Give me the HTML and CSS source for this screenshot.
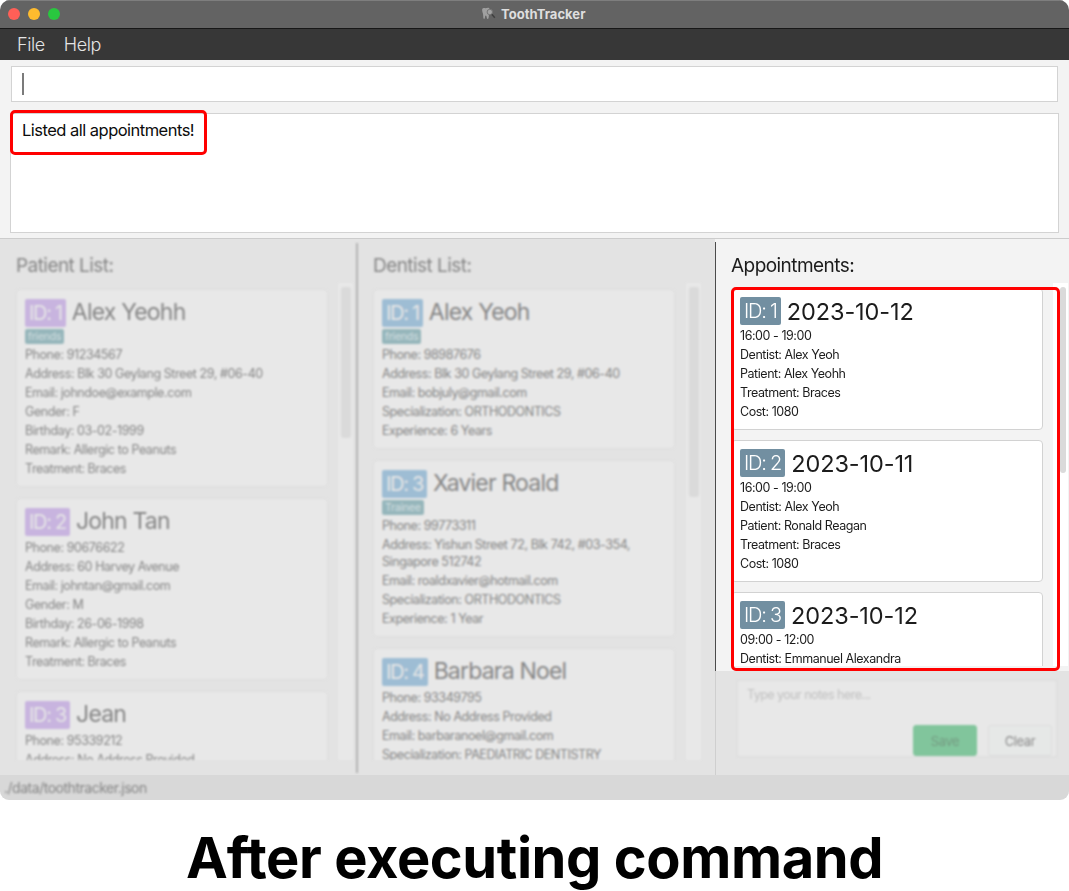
FILE: index.html
```
<!DOCTYPE html>
<html lang="en">
<head>
<meta charset="utf-8">
<title>ToothTracker</title>
<link rel="stylesheet" href="styles.css">
</head>
<body>
<div class="window">
  <header class="titlebar">
    <div class="lights"><i class="red"></i><i class="yellow"></i><i class="green"></i></div>
    <div class="title">
      <svg width="15" height="14" viewBox="0 0 15 14"><path d="M1.500 1.600C2.300.5 3.500 1.200 4.600 1.200S7 .3 8.200 1.200c1.200 1.300.4 3.500-.1 5.300-.4 1.700-.1 5.500-1.300 5.500S5.800 8.500 4.800 8.500 4.200 12 3.100 12 2.500 8 1.900 6.500C1.400 5 .7 2.800 1.500 1.600z" fill="#a0a0a0"/><circle cx="8.800" cy="5" r="2.700" fill="#a3a3a3" stroke="#757575" stroke-width="1"/><path d="M10.800 7.300l3 3.500" stroke="#3f3f3f" stroke-width="1.500"/></svg>
      <span>ToothTracker</span>
    </div>
  </header>
  <nav class="menubar"><span>File</span><span>Help</span></nav>
  <section class="command"><div class="input"><i class="caret"></i></div></section>
  <section class="result"><div class="output"><span>Listed all appointments!</span><i class="mark mark-result"></i></div></section>
  <main class="panels">
    <section class="panel patients dim">
      <div class="soft">
      <h2>Patient List:</h2>
      <div class="scroller">
        <div class="cards">
          <article class="card tagged"><h3><b>ID: 1</b><span>Alex Yeohh</span></h3><em>friends</em>
            <p>Phone: 91234567</p><p>Address: Blk 30 Geylang Street 29, #06-40</p><p>Email: johndoe@example.com</p><p>Gender: F</p><p>Birthday: 03-02-1999</p><p>Remark: Allergic to Peanuts</p><p>Treatment: Braces</p></article>
          <article class="card"><h3><b>ID: 2</b><span>John Tan</span></h3>
            <p>Phone: 90676622</p><p>Address: 60 Harvey Avenue</p><p>Email: johntan@gmail.com</p><p>Gender: M</p><p>Birthday: 26-06-1998</p><p>Remark: Allergic to Peanuts</p><p>Treatment: Braces</p></article>
          <article class="card"><h3><b>ID: 3</b><span>Jean</span></h3>
            <p>Phone: 95339212</p><p>Address: No Address Provided</p></article>
        </div>
        <div class="track"><i></i></div>
      </div>
      </div>
    </section>
    <section class="panel dentists dim">
      <div class="soft">
      <h2>Dentist List:</h2>
      <div class="scroller">
        <div class="cards">
          <article class="card tagged"><h3><b>ID: 1</b><span>Alex Yeoh</span></h3><em>friends</em>
            <p>Phone: 98987676</p><p>Address: Blk 30 Geylang Street 29, #06-40</p><p>Email: bobjuly@gmail.com</p><p>Specialization: ORTHODONTICS</p><p>Experience: 6 Years</p></article>
          <article class="card tagged"><h3><b>ID: 3</b><span>Xavier Roald</span></h3><em>Trainee</em>
            <p>Phone: 99773311</p><p>Address: Yishun Street 72, Blk 742, #03-354,<br>Singapore 512742</p><p>Email: roaldxavier@hotmail.com</p><p>Specialization: ORTHODONTICS</p><p>Experience: 1 Year</p></article>
          <article class="card"><h3><b>ID: 4</b><span>Barbara Noel</span></h3>
            <p>Phone: 93349795</p><p>Address: No Address Provided</p><p>Email: barbaranoel@gmail.com</p><p>Specialization: PAEDIATRIC DENTISTRY</p></article>
        </div>
        <div class="track"><i></i></div>
      </div>
      </div>
    </section>
    <div class="right">
      <section class="panel appointments">
        <h2>Appointments:</h2>
        <div class="scroller">
          <div class="cards">
            <article class="card"><h3><b>ID: 1</b><span>2023-10-12</span></h3>
              <p>16:00 - 19:00</p><p>Dentist: Alex Yeoh</p><p>Patient: Alex Yeohh</p><p>Treatment: Braces</p><p>Cost: 1080</p></article>
            <article class="card"><h3><b>ID: 2</b><span>2023-10-11</span></h3>
              <p>16:00 - 19:00</p><p>Dentist: Alex Yeoh</p><p>Patient: Ronald Reagan</p><p>Treatment: Braces</p><p>Cost: 1080</p></article>
            <article class="card"><h3><b>ID: 3</b><span>2023-10-12</span></h3>
              <p>09:00 - 12:00</p><p>Dentist: Emmanuel Alexandra</p></article>
          </div>
          <div class="track"><i></i></div>
        </div>
        <i class="mark mark-list"></i>
      </section>
      <section class="notes dim">
        <div class="notebox soft">
          <span>Type your notes here...</span>
          <div class="buttons"><button class="save">Save</button><button class="clear">Clear</button></div>
        </div>
      </section>
    </div>
  </main>
  <footer class="status"><span>./data/toothtracker.json</span></footer>
</div>
<div class="caption">After executing command</div>
</body>
</html>
```

FILE: styles.css
```
* { box-sizing: border-box; }
body { margin: 0; width: 1069px; height: 891px; overflow: hidden; background: #fff; font-family: Inter, "Liberation Sans", sans-serif; color: #1c1c1c; }
i, em { font-style: normal; display: block; }
h2, h3, p { margin: 0; font-weight: 400; white-space: nowrap; }
.window { height: 800px; display: flex; flex-direction: column; background: #f3f3f3; border-radius: 10px 10px 9px 9px; overflow: hidden; }
.titlebar { height: 29px; display: flex; align-items: center; background: #636363; border-top: 1px solid #7e7e7e; border-bottom: 1px solid #171717; flex: none; }
.lights { display: flex; gap: 8px; width: 60px; padding-left: 8px; margin-top: -1px; flex: none; }
.lights i { width: 12px; height: 12px; border-radius: 50%; }
.red { background: #ff5f57; }
.yellow { background: #febb2e; }
.green { background: #29c73f; }
.title { display: flex; align-items: center; gap: 5px; margin-left: 421px; padding-bottom: 2px; font-size: 13px; font-weight: 700; color: #dedede; letter-spacing: 0.03px; }
.title svg { margin-top: 1px; }
.menubar { height: 31px; flex: none; display: flex; align-items: center; gap: 19px; padding-left: 17px; background: #373737; color: #e4e4e4; font-size: 18px; font-weight: 300; letter-spacing: -0.4px; }
.command { height: 53px; flex: none; padding: 6px 11px 11px; }
.input { height: 36px; background: #fff; border: 1px solid #d3d3d3; padding: 6px 10px; }
.caret { width: 2px; height: 22px; background: #7b7b7b; }
.result { height: 125px; flex: none; padding: 0 10px 5px; }
.output { position: relative; height: 120px; background: #fff; border: 1px solid #d3d3d3; padding: 6px 11px; font-size: 16.500px; line-height: 20px; letter-spacing: -0.520px; color: #0c0c0c; }
.mark { position: absolute; border: 3px solid #f00; border-radius: 5px; }
.mark-result { left: -1px; top: -4px; width: 197px; height: 45px; }
.panels { height: 537px; flex: none; display: grid; grid-template-columns: 357px 358px 354px; border-top: 1px solid #ccc; }
.panel { height: 536px; overflow: hidden; }
.dim { background: #e3e3e3; color: #858585; }
.soft { filter: blur(0.9px); }
.panel h2 { font-size: 19px; line-height: 24px; letter-spacing: -0.55px; padding-top: 15px; height: 44px; }
.patients { padding-left: 16px; }
.dentists { position: relative; padding-left: 16px; overflow: visible; }
.dentists::before { content: ""; position: absolute; left: -1px; top: 4px; bottom: 2px; width: 2px; background: #b4b4b4; filter: blur(0.8px); }
.scroller { display: flex; justify-content: space-between; height: 477px; overflow: hidden; }
.cards { padding-top: 6px; width: 312px; display: flex; flex-direction: column; gap: 11px; flex: none; }
.card { flex: none; padding: 9px 8px; background: #e8e8e8; border: 1px solid #dcdcdc; border-radius: 4px; height: 182px; }
.patients .tagged { height: 198px; }
.dentists .cards { width: 302px; }
.dentists .tagged { height: 160px; }
.dentists .tagged + .tagged { height: 177px; }
.card h3 { display: flex; align-items: center; gap: 6px; height: 28px; margin-bottom: 3px; font-size: 23px; letter-spacing: -0.8px; }
.card h3 span { padding-bottom: 3px; }
.tagged h3 { margin-bottom: 2px; }
.card b { font-weight: 400; font-size: 20px; line-height: 28px; height: 28px; padding: 0 4px 0 4px; border-radius: 2px; letter-spacing: -1.3px; color: #e6e6e6; background: #c8b4df; }
.dentists b { background: #9ebdd4; }
.card em { width: max-content; height: 15px; margin-bottom: 2px; padding: 0 3px; border-radius: 2px; font-size: 10.500px; line-height: 16px; letter-spacing: -0.2px; color: #d3dfe1; background: #96b6bb; }
.card p { font-size: 12.500px; line-height: 17px; margin-bottom: 2px; letter-spacing: -0.42px; }
.track { width: 15px; padding: 4px 3px 0; background: #e8e8e8; margin-right: 4px; flex: none; }
.track i { width: 10px; border-radius: 3px; background: #dadada; }
.patients .track i { height: 151px; }
.dentists .track { margin-right: 14px; }
.dentists .track i { height: 210px; }
.right { display: flex; flex-direction: column; }
.appointments { position: relative; height: 432px; flex: none; padding-left: 16px; overflow: visible; }
.appointments::before { content: ""; position: absolute; left: 0; top: 3px; width: 1px; height: 429px; background: #4b4b4b; }
.appointments .scroller { height: 383px; }
.appointments .card { height: 142px; margin-bottom: -1px; padding-top: 8px; background: #fff; border-color: #d2d2d2; }
.appointments .cards { padding-top: 5px; }
.appointments .card h3 { margin-bottom: 2px; font-size: 23.500px; letter-spacing: -0.1px; }
.appointments .card h3 span { padding-bottom: 0; }
.appointments .card b { background: #728fa1; color: #fff; font-weight: 300; letter-spacing: -1.200px; }
.appointments .card p { letter-spacing: -0.45px; }
.appointments .track { margin-right: 1px; padding-left: 7px; background: #fff; }
.appointments .track i { width: 6px; height: 186px; background: #dadada; }
.mark-list { left: 16px; top: 48px; width: 329px; height: 384px; }
.notes { height: 104px; padding: 9px 12px 18px 21px; border-left: 1px solid #cfcfcf; }
.notebox { height: 77px; display: flex; flex-direction: column; justify-content: space-between; background: #e8e8e8; border: 1px solid #dcdcdc; padding: 7px 4px 0 9px; color: #c0c0c0; font-size: 12.500px; line-height: 14px; letter-spacing: -0.550px; }
.buttons { display: flex; justify-content: flex-end; gap: 11px; }
button { width: 64px; height: 31px; padding: 0; border: 1px solid #ddd; border-radius: 3px; font: 13px Inter, sans-serif; letter-spacing: -0.4px; color: #8a8a8a; background: #e6e8e7; }
.save { background: #81c59c; border-color: #81c59c; color: #759b82; }
.status { height: 25px; flex: none; padding-left: 4px; background: #d8d8d8; color: #858585; font-size: 14px; line-height: 25px; letter-spacing: -0.48px; }
.status span { filter: blur(0.9px); display: block; }
.caption { height: 91px; padding-top: 24px; text-align: center; font-size: 56px; line-height: 68px; letter-spacing: -0.43px; font-weight: 700; color: #000; white-space: nowrap; }
```
